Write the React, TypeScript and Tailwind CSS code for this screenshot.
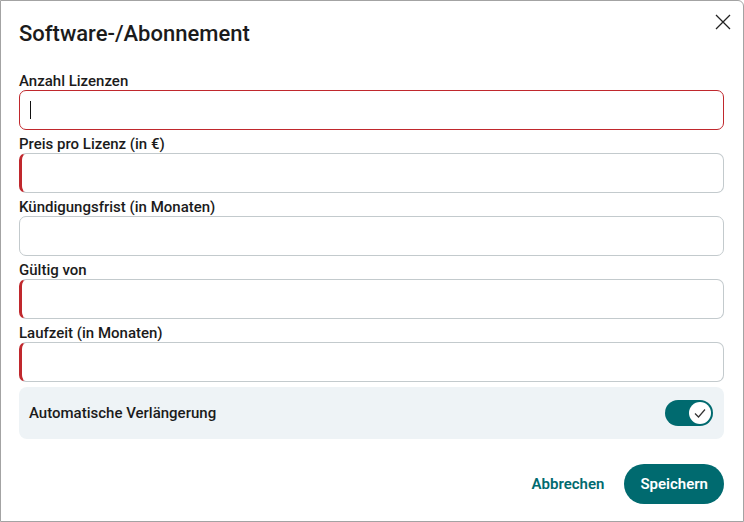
import React from "react";

const Field = ({ label, variant, cursor }: { label: string; variant: "focus" | "invalid" | "normal"; cursor?: boolean }) => {
  const cls =
    variant === "focus"
      ? "border border-[#c0282d]"
      : variant === "invalid"
      ? "border border-[#c3cacd] border-l-[3px] border-l-[#c0282d]"
      : "border border-[#c3cacd]";
  return (
    <div className="flex flex-col">
      <label className="h-[20px] text-[15px] leading-[22px] font-medium text-[#1b1b1b]">{label}</label>
      <div className={`h-[40px] rounded-[7px] bg-white flex items-center px-[10px] ${cls}`}>
        {cursor && <span className="block w-[1px] h-[18px] bg-[#111]" />}
      </div>
    </div>
  );
};

export default function App() {
  return (
    <div className="w-[744px] h-[522px] bg-white border border-[#a3a3a3] rounded-tr-[6px] relative flex flex-col" style={{ fontFamily: "Roboto, 'Noto Sans', sans-serif" }}>
      <button className="absolute top-[12px] right-[11px] w-[18px] h-[18px] flex items-center justify-center">
        <svg width="16" height="16" viewBox="0 0 16 16">
          <path d="M1 1 L15 15 M15 1 L1 15" stroke="#222" strokeWidth="1.3" fill="none" />
        </svg>
      </button>
      <div className="pl-[18px] pr-[19px] pt-[19px] flex flex-col">
        <h2 className="text-[22px] leading-[28px] font-medium text-[#1b1b1b]">Software-/Abonnement</h2>
        <div className="mt-[22px] flex flex-col gap-[3px]">
          <Field label="Anzahl Lizenzen" variant="focus" cursor />
          <Field label="Preis pro Lizenz (in €)" variant="invalid" />
          <Field label="Kündigungsfrist (in Monaten)" variant="normal" />
          <Field label="Gültig von" variant="invalid" />
          <Field label="Laufzeit (in Monaten)" variant="invalid" />
        </div>
        <div className="mt-[5px] h-[52px] rounded-[8px] bg-[#eef3f6] flex items-center justify-between pl-[10px] pr-[11px]">
          <span className="text-[15px] font-medium text-[#1b1b1b]">Automatische Verlängerung</span>
          <div className="w-[48px] h-[26px] rounded-full bg-[#006a6f] flex items-center justify-end pr-[2px]">
            <div className="w-[22px] h-[22px] rounded-full bg-white flex items-center justify-center">
              <svg width="14" height="14" viewBox="0 0 14 14">
                <path d="M2 7.5 L5.5 11 L12 3.5" stroke="#333" strokeWidth="1.2" fill="none" />
              </svg>
            </div>
          </div>
        </div>
        <div className="mt-[25px] flex items-center justify-end gap-[20px]">
          <button className="text-[15px] font-semibold text-[#006a6f]">Abbrechen</button>
          <button className="h-[40px] px-[16px] rounded-full bg-[#006a6f] text-white text-[15px] font-semibold">Speichern</button>
        </div>
      </div>
    </div>
  );
}
